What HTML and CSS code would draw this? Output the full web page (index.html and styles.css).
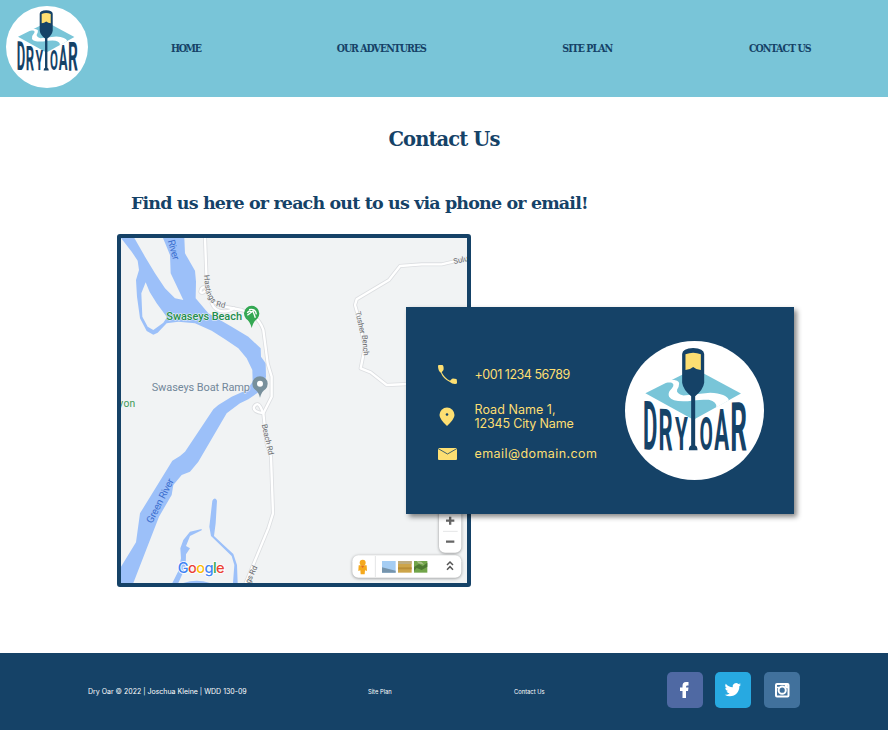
FILE: index.html
```html
<!DOCTYPE html>
<html lang="en">
<head>
<meta charset="utf-8">
<title>Dry Oar | Contact Us</title>
<link rel="stylesheet" href="styles.css">
</head>
<body>
<svg class="defs" aria-hidden="true">
  <symbol id="logo" viewBox="30 33 416 416">
    <circle cx="238" cy="241" r="208" fill="#fff"/>
    <path d="M91 189L238 115L377 190L235 269Z" fill="#79c5d8"/>
    <path d="M143 157L166 149Q193 150 192 160Q192 170 186 178Q182 190 205 196L285 188Q334 191 341 210L303 232Q306 215 281 209Q250 207 218 213Q172 216 162 200Q157 187 170 175Q181 161 168 157Z" fill="#fff"/>
    <path d="M201 72Q202 55 234 54Q266 55 267 72V158Q264 179 240 198V346Q247 348 247 360H221Q221 348 228 346V198Q204 179 201 158Z" fill="#154267"/>
    <path d="M211 73Q234 63 257 73V120Q244 120 234 111Q224 120 211 120Z" fill="#fddf72"/>
    <g class="logo-letters">
      <text transform="matrix(.66 .05 0 2.04 84 357)">D</text>
      <text transform="matrix(.66 .03 0 1.74 130 359)">R</text>
      <text transform="matrix(.62 0 0 1.4 180 360)">Y</text>
      <text transform="matrix(.58 0 0 1.37 253 359)">O</text>
      <text transform="matrix(.66 0 0 1.74 297 360)">A</text>
      <text transform="matrix(.78 -.03 0 2.04 345 362)">R</text>
    </g>
  </symbol>
</svg>

<header class="site-header">
  <svg class="logo logo-small"><use href="#logo"/></svg>
  <nav class="nav">
    <a class="n1">HOME</a><a class="n2">OUR ADVENTURES</a><a class="n3">SITE PLAN</a><a class="n4">CONTACT US</a>
  </nav>
</header>

<main>
  <h1>Contact Us</h1>
  <h2>Find us here or reach out to us via phone or email!</h2>
  <section class="contact">
    <div class="map">
      <svg viewBox="18 24 1038 1035" width="346" height="345">
        <rect x="18" y="24" width="1038" height="1035" fill="#f1f3f4"/>
        <g fill="#9cc0f9">
          <path d="M18 24L50 65L68 92L72 120L63 150L66 200L75 265L95 303L115 314L128 308L155 280L190 275L240 280L290 302L330 328L370 355L395 385L412 420L413 455L395 480L350 500L310 525L295 538L270 575L210 665L195 678L172 692L75 850L63 937L18 1010V1059H55L132 860L170 795L175 765L200 735L225 725L250 695L335 550L375 520L400 508L440 480L453 440L452 400L438 380L437 355L400 320L350 290L280 250L242 205L243 155L240 122L210 70L208 24H144L165 75L167 130L205 210L180 205L150 175L120 130L90 80L58 24Z"/>
          <path d="M292 812Q300 799 306 812L302 880L297 918L325 944L355 972L366 1005L368 1059H354L358 1005L350 978L288 918L283 890Z"/>
          <path d="M260 897L225 905L205 930L196 955L198 985L189 1025L172 1059H190L212 1010L213 973L225 955L213 948L225 918L260 901Z"/>
          <path d="M205 1059Q245 1046 285 1059Z"/>
        </g>
        <path d="M92 157L79 190L82 260L98 290L115 300L145 278L156 262L125 220L104 186Z" fill="#f1f3f4"/>
        <g fill="none" stroke-linejoin="round" stroke-linecap="round">
          <g stroke="#dcdee1" stroke-width="12">
            <path id="r1" d="M270 24L274 130L278 185Q292 223 325 229L380 240Q430 255 445 300L458 400L470 440V500L445 550L455 640L468 680L474 850L460 895L400 1040L392 1059"/>
            <path id="r2" d="M275 172Q258 168 256 185Q264 195 277 175M290 220Q300 244 325 244Q345 246 356 234M445 550Q412 545 417 530Q428 514 437 532L445 550"/>
            <path id="r3" d="M1056 85L980 103H920L855 108L822 150L725 208L720 225L730 260L750 350L737 415L767 427L815 465L880 462"/>
          </g>
          <g stroke="#fff" stroke-width="7"><use href="#r1"/><use href="#r2"/><use href="#r3"/></g>
        </g>
        <path d="M410 294Q405 273 393 266A23 23 0 1 1 427 266Q415 273 410 294Z" fill="#34a853"/>
        <path d="M397 256L414 243L421 263M402 239Q422 235 424 253M397 249Q401 240 410 246" fill="none" stroke="#fff" stroke-width="4"/>
        <path d="M435 503Q430 484 418 477A23 23 0 1 1 452 477Q440 484 435 503Z" fill="#78909c"/>
        <circle cx="435" cy="461" r="9" fill="#fff"/>
        <g class="map-text">
          <text class="beach" x="154" y="271" textLength="227">Swaseys Beach</text>
          <text class="ramp" x="110" y="482" textLength="295">Swaseys Boat Ramp</text>
          <text x="10" y="531" textLength="51" fill="#3f9b57" font-size="31">yon</text>
          <text class="water" transform="translate(158 32) rotate(75)" textLength="62">River</text>
          <text class="water" transform="translate(111 882) rotate(-63)" textLength="146">Green River</text>
          <g class="street">
            <text transform="translate(267 136) rotate(84)" textLength="54">Hasti</text>
            <text transform="translate(273 190) rotate(59)" textLength="36">ngs</text>
            <text transform="translate(302 228) rotate(13)" textLength="28">Rd</text>
            <text transform="translate(440 584) rotate(77)" textLength="94">Beach Rd</text>
            <text transform="translate(404 1062) rotate(-65)" textLength="56">gs Rd</text>
            <text transform="translate(721 246) rotate(77)" textLength="68">Tusher</text>
            <text transform="translate(741 316) rotate(85)" textLength="61">Bench</text>
            <text transform="translate(1017 102) rotate(-12)">Sulu</text>
          </g>
          <text class="google" x="188" y="1028" textLength="141"><tspan fill="#4285f4">G</tspan><tspan fill="#ea4335">o</tspan><tspan fill="#fbbc05">o</tspan><tspan fill="#4285f4">g</tspan><tspan fill="#34a853">l</tspan><tspan fill="#ea4335">e</tspan></text>
        </g>
        <g class="control"><rect x="972" y="800" width="67" height="168" rx="18"/><rect x="712" y="976" width="327" height="67" rx="18"/></g>
        <path d="M984 904H1028M781 978V1041" stroke="#e4e5e6" stroke-width="3"/>
        <path d="M993 872H1018M1005.500 860V884M993 935H1018" stroke="#666" stroke-width="7"/>
        <path d="M996 1005L1005 996L1014 1005M996 1019L1005 1010L1014 1019" fill="none" stroke="#555" stroke-width="4.500"/>
        <g fill="#f5a91d"><circle cx="743" cy="998" r="9"/><path d="M731 1006H755L756 1023L750 1021L749 1033H737L736 1021L730 1023Z"/></g>
        <path d="M738 1007H748L743 1014Z" fill="#e06b26"/>
        <path d="M801 993H842V1028H801Z" fill="#a5cdf3"/><path d="M801 1012L842 1022V1028H801Z" fill="#7694ac"/>
        <path d="M849 993H890V1028H849Z" fill="#cda54a"/><path d="M849 993H890V1002H849Z" fill="#bdad80"/><path d="M849 1012H890V1018H849Z" fill="#b98e36"/>
        <path d="M897 993H937V1028H897Z" fill="#72a54a"/><path d="M897 1011L912 1002L923 1009L937 998V1010L920 1020L905 1014L897 1023Z" fill="#4d7932"/><path d="M905 993L919 995L928 1004L910 1000Z" fill="#abc28a"/>
      </svg>
    </div>
    <aside class="card">
      <ul>
        <li class="phone">
          <svg viewBox="0 0 20 20"><path d="M0 1Q0 0 1 0H4.500Q6 1 5.500 5L3.700 7.300Q6.500 13 12 15.800L14 13.700Q15 13.200 18.300 14Q19 14 19 18Q19 19 17 19Q14 19 11.500 16.800Q5 13.500 3 8Q0 6 0 1Z" fill="#fddf72"/></svg>
          <span class="t1">+001 1234 56789</span>
        </li>
        <li class="place">
          <svg viewBox="0 0 20 20"><path d="M9 19Q1.500 12 1.500 8A7.500 7.500 0 0 1 16.500 8Q16.500 12 9 19Z" fill="#fddf72"/><circle cx="9" cy="7.500" r="1.300" fill="#154267"/></svg>
          <span><span class="t2">Road Name 1,</span><br><span class="t3">12345 City Name</span></span>
        </li>
        <li class="mail">
          <svg viewBox="0 0 20 20"><rect y="4" width="19" height="12" rx="1" fill="#fddf72"/><path d="M0 4.500L9.500 10L19 4.500" fill="none" stroke="#154267" stroke-width=".8"/></svg>
          <span class="t4">email@domain.com</span>
        </li>
      </ul>
      <svg class="logo logo-large"><use href="#logo"/></svg>
    </aside>
  </section>
</main>

<footer>
  <span class="f1">Dry Oar © 2022 | Joschua Kleine | WDD 130-09</span>
  <a class="f2">Site Plan</a>
  <a class="f3">Contact Us</a>
  <div class="social">
    <svg viewBox="0 0 36 36"><rect width="36" height="36" rx="5" fill="#4f69a3"/><path d="M15.500 26V19H13V15.500H15.500V14Q15.500 10 19 10H21.500V13.500H20Q19 13.500 19 15V15.500H21.500L21 19H19V26Z" fill="#fff"/></svg>
    <svg viewBox="0 0 36 36"><rect width="36" height="36" rx="5" fill="#27a9e1"/><path transform="translate(9.700 9.500) scale(.68)" d="M23.950 4.570a10 10 0 0 1-2.820.77 5 5 0 0 0 2.160-2.720c-.95.560-2 .96-3.130 1.190a4.920 4.920 0 0 0-8.380 4.480C7.690 8.100 4.070 6.130 1.640 3.160a4.930 4.930 0 0 0 1.520 6.570 4.900 4.900 0 0 1-2.230-.61v.06a4.920 4.920 0 0 0 3.950 4.830 5 5 0 0 1-2.210.08 4.940 4.940 0 0 0 4.600 3.420A9.870 9.870 0 0 1 0 19.540a14 14 0 0 0 7.550 2.210c9.050 0 14-7.500 14-13.980l-.02-.64a10 10 0 0 0 2.420-2.560z" fill="#fff"/></svg>
    <svg viewBox="0 0 36 36"><rect width="36" height="36" rx="5" fill="#41719c"/><rect x="12" y="12" width="12.500" height="12.500" rx="1" fill="none" stroke="#fff" stroke-width="2"/><circle cx="18.200" cy="18.200" r="3.600" fill="none" stroke="#fff" stroke-width="2"/><path d="M11.500 15.500H15M21.500 15.500H25" stroke="#fff" stroke-width="1.500"/><rect x="20.700" y="12.300" width="3" height="3" fill="#fff"/></svg>
  </div>
</footer>
</body>
</html>
```
FILE: styles.css
```css
* { box-sizing: border-box; }
body { margin: 0; background: #fff; color: #154267; font-family: Inter, "Liberation Sans", sans-serif; }
.defs { display: none; }
.logo { display: block; flex: none; }
.logo-small { width: 82px; height: 82px; }
.logo-large { width: 139px; height: 139px; }
.logo-letters { font: bold 100px Roboto, "Liberation Sans", sans-serif; fill: #154267; }

.site-header { height: 97px; padding: 6px 77px 0 6px; display: flex; background: #79c5d8; }
.nav { flex: 1; display: flex; justify-content: space-between; padding: 35px 0 0 83px; font: bold 10.5px/14px "DejaVu Serif Condensed", "DejaVu Serif", serif; font-stretch: condensed; letter-spacing: -.95px; }
.nav a { white-space: nowrap; }
.n1 { width: 30px; letter-spacing: -1.3px; }
.n2 { width: 90px; letter-spacing: -1px; }
.n3 { width: 51px; }
.n4 { width: 62px; }

main { height: 556px; }
h1, h2 { margin: 0; font-family: "DejaVu Serif", serif; font-weight: bold; white-space: nowrap; }
h1 { padding-top: 29px; text-align: center; font-size: 19.5px; line-height: 28px; letter-spacing: -.9px; }
h2 { margin: 36px 0 0 131px; font-size: 17.5px; line-height: 26px; letter-spacing: -.85px; }
.contact { position: relative; margin: 18px 0 0 117px; width: 677px; }
.map { width: 354px; height: 353px; border: 4px solid #154267; border-radius: 3px; overflow: hidden; }
.map svg { display: block; }
.map-text { font-family: Roboto, sans-serif; stroke: #f1f3f4; stroke-width: 3px; paint-order: stroke; }
.beach, .ramp { font-size: 33px; }
.beach { fill: #1e8e4e; font-weight: 500; }
.ramp { fill: #71879a; }
.water { fill: #3c6fcf; font-size: 30px; stroke: none; }
.street { fill: #68696c; font-size: 23px; }
.google { font: 500 44px Inter, sans-serif; stroke: #fff; stroke-width: 5px; }
.control { fill: #fff; filter: drop-shadow(0 2px 4px #0006); }
.card { position: absolute; left: 289px; top: 73px; width: 388px; height: 207px; display: flex; justify-content: space-between; padding: 34px 30px 0 32px; background: #154267; box-shadow: 3px 3px 5px #0007; }
.card ul { margin: 0; padding: 22px 0 0; list-style: none; color: #fddf72; font-size: 12.5px; line-height: 14px; white-space: nowrap; }
.card li { display: flex; align-items: center; gap: 16.5px; }
.card li svg { width: 20px; height: 20px; flex: none; }
.phone { height: 24px; }
.place { margin-top: 14.5px; height: 30px; }
.mail { margin-top: 10px; height: 24px; }
.t1 { letter-spacing: -.47px; }
.t2 { letter-spacing: .05px; }
.t3 { letter-spacing: -.15px; }
.t4 { letter-spacing: .42px; }

footer { height: 77px; display: flex; align-items: center; padding: 0 88px; background: #154267; color: #fff; font-size: 7px; white-space: nowrap; }
.f1 { width: 280px; }
.f2, .f3 { font-size: 5.8px; }
.f2 { width: 146px; }
.f3 { width: 152.5px; }
.social { display: flex; gap: 12.5px; padding-bottom: 3px; }
.social svg { width: 36px; height: 36px; }
```
